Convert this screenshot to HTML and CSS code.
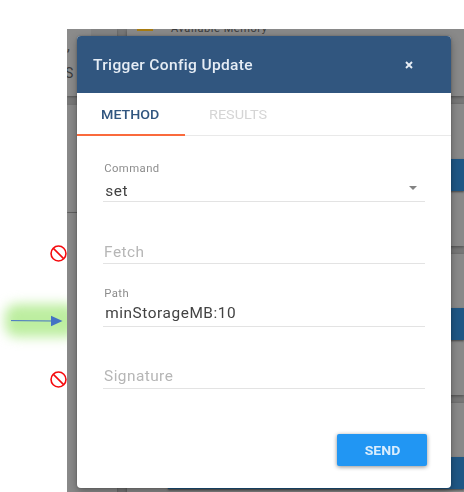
FILE: index.html
```html
<!DOCTYPE html>
<html lang="en">
<head>
<meta charset="utf-8">
<title>Trigger Config Update</title>
<link rel="stylesheet" href="styles.css">
</head>
<body>
<main class="page">
  <aside class="notes">
    <svg class="ban ban-fetch" viewBox="0 0 18 18"><circle cx="9" cy="9" r="7.9"/><path d="M3.6 3.6l10.8 10.8"/></svg>
    <div class="glow"></div>
    <svg class="arrow" viewBox="0 0 52 12"><path class="shaft" d="M0 5.6L42 6"/><path class="head" d="M40 .7L51.5 6 40 11.3z"/></svg>
    <svg class="ban ban-signature" viewBox="0 0 18 18"><circle cx="9" cy="9" r="7.9"/><path d="M3.6 3.6l10.8 10.8"/></svg>
  </aside>
  <section class="stage">
    <div class="backdrop">
      <div class="side-column">
        <div class="side-card side-top"><span class="comma">,</span><span>S</span></div>
        <div class="side-card side-middle"></div>
        <div class="side-card side-bottom"></div>
      </div>
      <div class="card-column">
        <div class="card card-top"><i class="level"></i><span>Available Memory</span></div>
        <div class="card card-one"><i class="action"></i></div>
        <div class="card"><i class="action"></i></div>
        <div class="card"><i class="action"></i></div>
        <div class="card card-last"><i class="action"></i></div>
      </div>
    </div>
    <div class="dialog">
      <header class="dialog-head"><h1>Trigger Config Update</h1>
        <svg class="close" viewBox="0 0 8 8"><path d="M1 1l6 6M7 1L1 7"/></svg>
      </header>
      <nav class="tabs"><span class="tab active"><b>METHOD</b></span><span class="tab"><b>RESULTS</b></span></nav>
      <form class="form">
        <div class="field command"><span class="label">Command</span><span class="value">set</span><i class="caret"></i></div>
        <div class="field fetch"><span class="placeholder">Fetch</span></div>
        <div class="field path"><span class="label">Path</span><span class="value">minStorageMB:10</span></div>
        <div class="field signature"><span class="placeholder">Signature</span></div>
        <button class="send" type="button"><span>SEND</span></button>
      </form>
    </div>
  </section>
</main>
</body>
</html>
```

FILE: styles.css
```css
* { box-sizing: border-box; }
body { margin: 0; background: #fff; font-family: Roboto, "Liberation Sans", sans-serif; }
.page { position: relative; display: grid; grid-template-columns: 67px 1fr; height: 492px; padding-top: 29px; overflow: hidden; }
.ban { position: absolute; left: 50px; z-index: 2; width: 17px; height: 17px; fill: none; stroke: #f50a0e; stroke-width: 1.7; }
.ban-fetch { top: 245px; }
.ban-signature { top: 371px; }
.glow { position: absolute; left: 5px; top: 304px; width: 74px; height: 33px; border-radius: 12px; background: #bdeea0; filter: blur(6px); }
.arrow { position: absolute; left: 11px; top: 315px; width: 52px; height: 12px; }
.shaft { fill: none; stroke: #4472c4; stroke-width: 1; }
.head { fill: #4472c4; }

.stage { position: relative; height: 463px; padding: 7px 0 0 10px; overflow: hidden; background: #787878; }
.backdrop { position: absolute; inset: 0; display: flex; gap: 10px; color: #3b3b3b; }
.side-column { width: 50px; }
.side-card { background: #898989; box-shadow: 0 1px 2px #555; }
.side-top { display: flex; flex-direction: column; height: 67px; padding: 9px 0 0 0; font-size: 14px; line-height: 21px; background: linear-gradient(90deg, #8b8b8b 24px, #838383 24px); }
.side-top span { margin-left: -2px; }
.side-top .comma { margin-left: 0; height: 25px; line-height: 16px; }
.side-middle { height: 107px; margin-top: 9px; }
.side-bottom { height: 290px; margin-top: 1px; }
.card-column { flex: 1; }
.card { height: 141px; margin-bottom: 8px; padding-top: 54px; background: #898989; box-shadow: 0 1px 3px #4c4c4c; }
.card-top { display: flex; height: 67px; padding: 0 0 0 10px; font-size: 11px; line-height: 13px; }
.card-top span { margin: -7px 0 0 18px; letter-spacing: .58px; }
.level { width: 16px; height: 2px; background: #a77b12; }
.card-one { height: 142px; padding-top: 55px; }
.action { display: block; height: 32px; margin-left: 41px; background: #1f5785; box-shadow: 0 1px 2px #444; }
.card-last { height: 100px; }

.dialog { position: relative; z-index: 2; width: 374px; height: 452px; overflow: hidden; border-radius: 4px; background: #fff; }
.stage::before { content: ""; position: absolute; left: 10px; top: 7px; width: 374px; height: 452px; border-radius: 4px; z-index: 1; box-shadow: 0 3px 8px rgba(0,0,0,.32), 0 0 2px rgba(0,0,0,.25); }
.dialog-head { display: flex; align-items: center; justify-content: space-between; height: 57px; padding: 0 38px 0 16px; background: #31567f; color: #e6edf5; }
h1, .tab b, .label, .value, .placeholder { transform-origin: 0 50%; }
h1 { margin: 0; padding-top: 1px; font-size: 14px; font-weight: 500; letter-spacing: .3px; transform: scaleX(1.11); }
.close { width: 8px; height: 8px; fill: none; stroke: #e8eef5; stroke-width: 1.9; }
.tabs { display: flex; height: 43px; border-bottom: 1px solid #e9e9e9; }
.tab { width: 108px; height: 42px; line-height: 42px; padding-left: 24px; font-size: 13.5px; color: #d5d5d5; }
.tab b { display: inline-block; font-weight: 400; transform: scaleX(1.07); }
.active { height: 43px; border-bottom: 2px solid #fa6a3c; color: #31567f; }
.active b { font-weight: 500; transform: scaleX(1.05); }
.form { display: flex; flex-direction: column; margin: 0 26px; }
.field { position: relative; display: flex; flex-direction: column; align-items: flex-start; justify-content: flex-end; height: 62px; border-bottom: 1px solid #e3e3e3; }
.command { height: 66px; }
.label { padding-left: 1px; font-size: 10px; line-height: 12px; letter-spacing: .4px; color: #8c8c8c; transform: scaleX(1.13); }
.value { padding-left: 2px; font-size: 14px; line-height: 22px; letter-spacing: .5px; color: #424242; transform: scaleX(1.1); }
.command .value { line-height: 20px; margin-top: 6px; }
.path .value { margin-top: 1px; line-height: 17px; padding-bottom: 4px; }
.path .label { margin-bottom: 4px; }
.placeholder { padding: 0 0 2px 1px; font-size: 14px; line-height: 17px; letter-spacing: .4px; color: #b6b6b6; transform: scaleX(1.1); }
.path { height: 63px; }
.signature .placeholder { padding-bottom: 3px; }
.caret { position: absolute; right: 8px; bottom: 11px; border: 4px solid transparent; border-top-color: #838383; border-bottom: 0; }
.send { align-self: flex-end; width: 90px; height: 32px; margin: 45px -2px 0 0; padding: 0; border: 0; border-radius: 2px; background: #2196f3; color: #d9edfd; font: 700 13px Roboto, sans-serif; box-shadow: 0 1px 4px rgba(0,0,0,.45); }
.send span { display: inline-block; transform: scaleX(1.08); }
```
